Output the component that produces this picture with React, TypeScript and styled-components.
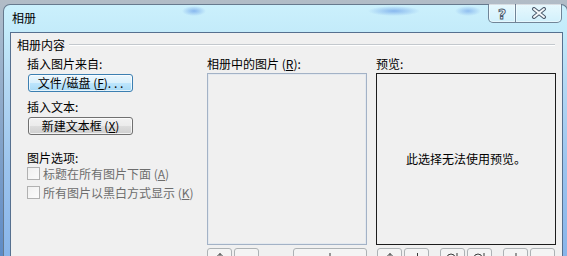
import React from "react";
import styled, { createGlobalStyle } from "styled-components";

const Global = createGlobalStyle`
  html, body { margin: 0; padding: 0; }
  body {
    width: 567px;
    height: 256px;
    overflow: hidden;
    font-family: "Noto Sans CJK SC", "Noto Sans", sans-serif;
    font-size: 12px;
    color: #000;
  }
`;

const Screen = styled.div`
  width: 567px;
  height: 256px;
  overflow: hidden;
  box-sizing: border-box;
  padding: 4px 0 0 3px;
  background: linear-gradient(180deg, #b2bcc6 0px, #a3b7cc 40px, #5e8bc6 256px);
`;

const Window = styled.div`
  width: 565px;
  height: 300px;
  box-sizing: border-box;
  border: 1px solid #66798d;
  border-bottom: none;
  border-radius: 7px 7px 0 0;
  padding: 0 4px 0 6px;
  display: flex;
  flex-direction: column;
  background:
    radial-gradient(12px 5px at 190px 6px, rgba(120, 170, 235, 0.8), rgba(120, 170, 235, 0)),
    radial-gradient(26px 5px at 390px 6px, rgba(120, 170, 235, 0.8), rgba(120, 170, 235, 0)),
    radial-gradient(13px 5px at 464px 6px, rgba(120, 170, 235, 0.7), rgba(120, 170, 235, 0)),
    linear-gradient(180deg, #cbf0fc 0px, #c3ebfa 27px, #b4d8f3 80px, #9cc4ee 160px, #88b5ea 252px);
`;

const TitleBar = styled.div`
  height: 27px;
  flex: none;
  display: flex;
  align-items: flex-start;
  padding-left: 2px;
`;

const Title = styled.div`
  margin-top: 6px;
  line-height: 14px;
  font-size: 12px;
`;

const CaptionButtons = styled.div`
  margin-left: auto;
  margin-right: 1px;
  margin-top: -1px;
  display: flex;
`;

const CaptionButton = styled.div<{ $w: number; $side: "left" | "right" }>`
  width: ${(p) => p.$w}px;
  height: 19px;
  box-sizing: border-box;
  border: 1px solid rgba(75, 95, 118, 0.75);
  border-top: none;
  ${(p) => (p.$side === "right" ? "border-left: none;" : "")}
  border-radius: ${(p) => (p.$side === "left" ? "0 0 0 5px" : "0 0 5px 0")};
  background: linear-gradient(180deg, rgba(255, 255, 255, 0.55), rgba(255, 255, 255, 0.2));
  box-shadow: inset 0 0 0 1px rgba(255, 255, 255, 0.45);
  display: flex;
  align-items: center;
  justify-content: center;
`;

const HelpGlyph = styled.span`
  font-family: "DejaVu Sans", sans-serif;
  font-weight: bold;
  font-size: 14px;
  line-height: 14px;
  color: #f4f8fb;
  -webkit-text-stroke: 0.9px #46566a;
  margin-top: 1px;
`;

const Client = styled.div`
  flex: 1;
  border: 1px solid #56708f;
  background: #f0f0f0;
  display: flex;
  flex-direction: column;
`;

const GroupHeader = styled.div`
  display: flex;
  align-items: center;
  gap: 4px;
  height: 14px;
  line-height: 14px;
  margin: 5px 7px 0 6px;
`;

const Rule = styled.div`
  flex: 1;
  height: 0;
  border-top: 1px solid #c3c8cd;
  border-bottom: 1px solid #ffffff;
`;

const Columns = styled.div`
  display: grid;
  grid-template-columns: 171px 160px 180px;
  column-gap: 9px;
  padding-left: 16px;
  margin-top: 5px;
  align-items: start;
`;

const Column = styled.div`
  display: flex;
  flex-direction: column;
  align-items: flex-start;
`;

const Label = styled.div<{ $gap?: number }>`
  line-height: 14px;
  height: 14px;
  white-space: pre;
  margin-top: ${(p) => p.$gap ?? 0}px;
`;

const PushButton = styled.div<{ $hot?: boolean }>`
  width: 105px;
  height: 18px;
  box-sizing: border-box;
  margin: 3px 0 0 1px;
  border-radius: 3px;
  border: 1px solid ${(p) => (p.$hot ? "#3c7fb1" : "#707070")};
  background: ${(p) =>
    p.$hot
      ? "linear-gradient(180deg, #eaf6fd 0%, #d9f0fc 50%, #bee6fd 50%, #a7d9f5 100%)"
      : "linear-gradient(180deg, #f2f2f2 0%, #ebebeb 50%, #dddddd 50%, #cfcfcf 100%)"};
  box-shadow: inset 0 0 0 1px rgba(255, 255, 255, 0.7);
  display: flex;
  align-items: center;
  justify-content: center;
  line-height: 14px;
  white-space: pre;
`;

const CheckRow = styled.div<{ $gap: number }>`
  display: flex;
  align-items: center;
  gap: 3px;
  height: 15px;
  margin-top: ${(p) => p.$gap}px;
  color: #6d6d6d;
  white-space: pre;
  line-height: 14px;
`;

const CheckBox = styled.span`
  width: 13px;
  height: 13px;
  box-sizing: border-box;
  border: 1px solid #b1b1b1;
  background: linear-gradient(135deg, #f0f0f0, #fbfbfb);
  flex: none;
`;

const ListBox = styled.div`
  width: 160px;
  height: 172px;
  box-sizing: border-box;
  margin-top: 2px;
  border: 1px solid #a3b2c6;
  box-shadow: inset 0 0 0 1px #e4e9ef;
  background: #f0f0f0;
`;

const PreviewBox = styled.div`
  width: 180px;
  height: 172px;
  box-sizing: border-box;
  margin-top: 2px;
  border: 1px solid #1c1c1c;
  background: #f0f0f0;
  display: flex;
  align-items: center;
  justify-content: center;
  line-height: 14px;
  white-space: nowrap;
`;

const ButtonRow = styled.div<{ $pad?: number }>`
  display: flex;
  gap: 11px;
  margin-top: 3px;
  padding-left: ${(p) => p.$pad ?? 0}px;
  width: 100%;
  box-sizing: border-box;
`;

const ButtonGroup = styled.div`
  display: flex;
  gap: 2px;
`;

const ToolButton = styled.div<{ $w?: number; $push?: boolean }>`
  width: ${(p) => p.$w ?? 25}px;
  height: 22px;
  box-sizing: border-box;
  border: 1px solid #adb2b5;
  border-radius: 3px;
  background: #f4f4f4;
  display: flex;
  justify-content: center;
  padding-top: 3px;
  ${(p) => (p.$push ? "margin-left: auto;" : "")}
`;

const Icon = ({ kind }: { kind: "up" | "down" | "rot" | "bar" | "none" }) => {
  if (kind === "none") return null;
  return (
    <svg width="16" height="16" viewBox="0 0 16 16" fill="none" stroke="#3a3a3a" strokeWidth="1">
      {kind === "up" && (
        <>
          <path d="M8 1.5V14" />
          <path d="M4.5 5L8 1.5L11.5 5" />
        </>
      )}
      {kind === "down" && (
        <>
          <path d="M8.5 1V13.5" />
          <path d="M5 10L8.5 13.5L12 10" />
        </>
      )}
      {kind === "bar" && <path d="M8 1V10" />}
      {kind === "rot" && (
        <>
          <circle cx="6" cy="6" r="4" />
          <path d="M12 1V12" />
        </>
      )}
    </svg>
  );
};

const CloseIcon = () => (
  <svg width="16" height="12" viewBox="0 0 16 12">
    <path d="M3 2L13 10M13 2L3 10" stroke="#4b5a6c" strokeWidth="4" strokeLinecap="round" />
    <path d="M3 2L13 10M13 2L3 10" stroke="#f6f9fb" strokeWidth="2" strokeLinecap="round" />
  </svg>
);

export default function App() {
  return (
    <>
      <Global />
      <Screen>
        <Window>
          <TitleBar>
            <Title>相册</Title>
            <CaptionButtons>
              <CaptionButton $w={28} $side="left">
                <HelpGlyph>?</HelpGlyph>
              </CaptionButton>
              <CaptionButton $w={46} $side="right">
                <CloseIcon />
              </CaptionButton>
            </CaptionButtons>
          </TitleBar>
          <Client>
            <GroupHeader>
              <span>相册内容</span>
              <Rule />
            </GroupHeader>
            <Columns>
              <Column>
                <Label>插入图片来自:</Label>
                <PushButton $hot>
                  文件/磁盘 (<u>F</u>). . .
                </PushButton>
                <Label $gap={8}>插入文本:</Label>
                <PushButton>
                  新建文本框 (<u>X</u>)
                </PushButton>
                <Label $gap={16}>图片选项:</Label>
                <CheckRow $gap={1}>
                  <CheckBox />
                  <span>
                    标题在所有图片下面 (<u>A</u>)
                  </span>
                </CheckRow>
                <CheckRow $gap={4}>
                  <CheckBox />
                  <span>
                    所有图片以黑白方式显示 (<u>K</u>)
                  </span>
                </CheckRow>
              </Column>
              <Column>
                <Label>
                  相册中的图片 (<u>R</u>):
                </Label>
                <ListBox />
                <ButtonRow>
                  <ButtonGroup>
                    <ToolButton>
                      <Icon kind="up" />
                    </ToolButton>
                    <ToolButton>
                      <Icon kind="none" />
                    </ToolButton>
                  </ButtonGroup>
                  <ToolButton $w={74} $push>
                    <Icon kind="bar" />
                  </ToolButton>
                </ButtonRow>
              </Column>
              <Column>
                <Label>预览:</Label>
                <PreviewBox>此选择无法使用预览。</PreviewBox>
                <ButtonRow $pad={1}>
                  <ButtonGroup>
                    <ToolButton>
                      <Icon kind="up" />
                    </ToolButton>
                    <ToolButton>
                      <Icon kind="down" />
                    </ToolButton>
                  </ButtonGroup>
                  <ButtonGroup>
                    <ToolButton>
                      <Icon kind="rot" />
                    </ToolButton>
                    <ToolButton>
                      <Icon kind="rot" />
                    </ToolButton>
                  </ButtonGroup>
                  <ButtonGroup>
                    <ToolButton>
                      <Icon kind="bar" />
                    </ToolButton>
                    <ToolButton>
                      <Icon kind="none" />
                    </ToolButton>
                  </ButtonGroup>
                </ButtonRow>
              </Column>
            </Columns>
          </Client>
        </Window>
      </Screen>
    </>
  );
}
